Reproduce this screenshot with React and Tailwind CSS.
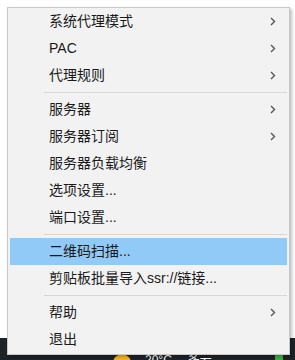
import React from 'react';

const items = [
  { label: '系统代理模式', sub: true },
  { label: 'PAC', sub: true },
  { label: '代理规则', sub: true },
  { sep: true },
  { label: '服务器', sub: true },
  { label: '服务器订阅', sub: true },
  { label: '服务器负载均衡' },
  { label: '选项设置...' },
  { label: '端口设置...' },
  { sep: true },
  { label: '二维码扫描...', active: true },
  { label: '剪贴板批量导入ssr://链接...' },
  { sep: true },
  { label: '帮助', sub: true },
  { label: '退出' },
];

function Chevron() {
  return (
    <svg width="6" height="9" viewBox="0 0 6 9" className="shrink-0">
      <polyline points="1,1 4.5,4.5 1,8" fill="none" stroke="#555" strokeWidth="1.4" />
    </svg>
  );
}

export default function App() {
  return (
    <div
      className="relative w-[295px] h-[360px] overflow-hidden bg-white flex flex-col"
      style={{ fontFamily: '"Liberation Sans", "Noto Sans CJK SC", sans-serif' }}
    >
      <div className="flex-1" />
      {/* taskbar behind the menu */}
      <div className="h-[22px] bg-[#1e2328] flex items-start pt-[16px] text-white text-[12px] leading-none">
        <div className="ml-[113px] w-[18px] h-[18px] rounded-full bg-[#f5b325]" />
        <span className="ml-[14px]">20°C</span>
        <span className="ml-[16px]">多云</span>
        <div className="ml-auto mr-[12px] w-[8px] h-[10px] bg-[#3cb043]" />
      </div>

      {/* context menu */}
      <div className="absolute left-[7px] top-[7px] w-[283px] border border-[#c8c8c8] bg-[#f2f2f2] pb-[1px] shadow-[2px_2px_3px_rgba(0,0,0,0.25)]">
        {items.map((it, i) =>
          it.sep ? (
            <div key={i} className="h-[7px] flex items-center ml-[36px] mr-[2px]">
              <div className="w-full h-[1px] bg-[#d7d7d7]" />
            </div>
          ) : (
            <div
              key={i}
              className={`h-[27px] mx-[2px] flex items-center pl-[39px] pr-[11px] text-[14px] text-[#1a1a1a] ${
                it.active ? 'bg-[#91c9f7]' : ''
              }`}
            >
              <span className="flex-1 whitespace-nowrap">{it.label}</span>
              {it.sub && <Chevron />}
            </div>
          )
        )}
      </div>
    </div>
  );
}
